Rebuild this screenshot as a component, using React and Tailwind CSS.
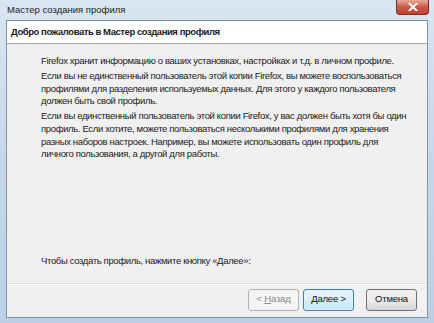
import React from "react";

const font = { fontFamily: '"Liberation Sans", Arial, sans-serif' };

const WizardButton = ({ children, variant = "normal" }) => {
  // Windows 7 style push buttons
  const styles = {
    disabled: "border-[#adb2b5] bg-[#f4f4f4] text-[#8a8a8a]",
    focused:
      "border-[#3c7fb1] bg-gradient-to-b from-[#eaf6fd] to-[#c4e5f6] text-[#111] shadow-[inset_0_0_0_1px_#e3f2fb]",
    normal:
      "border-[#707070] bg-gradient-to-b from-[#f2f2f2] via-[#ebebeb] to-[#d6d6d6] text-[#111]",
  };
  return (
    <div
      className={`w-[51px] h-[22px] rounded-[3px] border flex items-center justify-center text-[9.5px] tracking-[-0.2px] ${styles[variant]}`}
    >
      {children}
    </div>
  );
};

export default function App() {
  return (
    <div
      className="relative w-[434px] h-[323px] overflow-hidden flex flex-col bg-gradient-to-b from-[#d9e5f2] via-[#c6d7ea] to-[#bccfe5]"
      style={font}
    >
      {/* title bar */}
      <div className="h-[20px] flex items-center pl-[7px] text-[9.5px] text-[#1b1b1b]">
        Мастер создания профиля
      </div>
      <div className="absolute top-0 right-[5px] w-[33px] h-[15px] rounded-b-[4px] border border-[#7a2a22] border-t-0 bg-gradient-to-b from-[#e9a99a] via-[#c85a48] to-[#c2402e] flex items-center justify-center">
        <svg width="10" height="8" viewBox="0 0 10 8">
          <path
            d="M1.5 0.5 L8.5 7.5 M8.5 0.5 L1.5 7.5"
            stroke="#fff"
            strokeWidth="2"
            strokeLinecap="square"
          />
        </svg>
      </div>

      {/* client area */}
      <div className="mx-[6px] mb-[5px] flex-1 border border-[#7f93ab] bg-[#f0f0f0] flex flex-col text-[#1a1a1a]">
        <div className="h-[23px] bg-white border-b border-[#a0a0a0] flex items-center pl-[4px] text-[9.5px] tracking-[-0.45px] font-bold">
          Добро пожаловать в Мастер создания профиля
        </div>

        <div className="pl-[34px] pt-[11px] text-[9.5px] tracking-[-0.35px] leading-[12.6px] whitespace-nowrap flex flex-col gap-[2.5px]">
          <p>Firefox хранит информацию о ваших установках, настройках и т.д. в личном профиле.</p>
          <p>
            Если вы не единственный пользователь этой копии Firefox, вы можете воспользоваться
            <br />
            профилями для разделения используемых данных. Для этого у каждого пользователя
            <br />
            должен быть свой профиль.
          </p>
          <p>
            Если вы единственный пользователь этой копии Firefox, у вас должен быть хотя бы один
            <br />
            профиль. Если хотите, можете пользоваться несколькими профилями для хранения
            <br />
            разных наборов настроек. Например, вы можете использовать один профиль для
            <br />
            личного пользования, а другой для работы.
          </p>
        </div>

        <div className="flex-1" />
        <div className="pl-[34px] text-[9.5px] tracking-[-0.35px] leading-[12.5px] pb-[16px]">
          Чтобы создать профиль, нажмите кнопку «Далее»:
        </div>

        <div className="h-[34px] border-t border-[#dfdfdf] shadow-[inset_0_1px_0_#fff] flex items-center justify-end gap-[4px] pr-[10px] pb-[2px]">
          <WizardButton variant="disabled">
            &lt;&nbsp;<span className="underline">Н</span>азад
          </WizardButton>
          <WizardButton variant="focused">
            <span className="underline">Д</span>алее&nbsp;&gt;
          </WizardButton>
          <div className="w-[4px]" />
          <WizardButton>Отмена</WizardButton>
        </div>
      </div>
    </div>
  );
}
